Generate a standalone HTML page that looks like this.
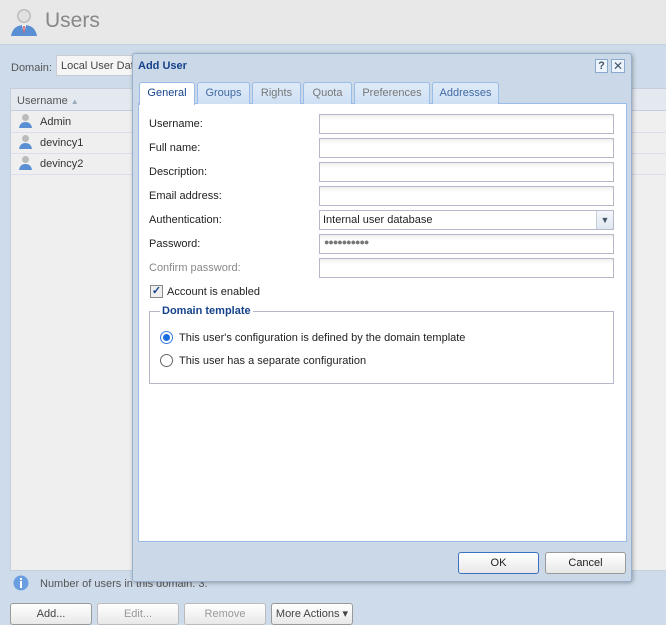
<!DOCTYPE html>
<html><head><style>
*{box-sizing:border-box;margin:0;padding:0}
body{width:666px;height:620px;overflow:hidden;background:#cedbea;font-family:"Liberation Sans",sans-serif;font-size:11px;color:#333;position:relative}
.abs{position:absolute}
.hdr{left:0;top:0;width:666px;height:45px;background:#e8e8e8;border-bottom:1px solid #c5d2e0}
.grid{left:10px;top:88px;width:660px;height:483px;background:#efefef;border:1px solid #c5cfdc}
.ghead{left:0;top:0;width:100%;height:22px;background:#e4e9f0;border-bottom:1px solid #c5cfdc}
.row{left:0;width:100%;height:21px;border-bottom:1px solid #dde;}
.inp{position:absolute;left:319px;width:295px;height:20px;border:1px solid #b5b8c8;background:linear-gradient(#f0f0f0,#fff 5px)}
.lbl{position:absolute;left:149px;font-size:11px;color:#222}
.tab{position:absolute;top:82px;height:22px;border:1px solid #99bce8;border-bottom:none;background:linear-gradient(#dfeaf7,#cfe0f5);color:#416aa3;font-size:11px;text-align:center;line-height:21px;border-radius:3px 3px 0 0}
.btn{position:absolute;height:22px;border:1px solid #999;border-radius:3px;background:linear-gradient(#fff,#e8e8e8);text-align:center;line-height:20px;font-size:11px}
</style></head><body>
<div class="abs hdr">
<svg class="abs" style="left:9px;top:6px" width="30" height="30" viewBox="0 0 30 30"><circle cx="15" cy="10" r="7" fill="#bbb"/><circle cx="15" cy="10" r="5.5" fill="#e0e0e0"/><path d="M2 30 Q4 19 15 19 Q26 19 28 30Z" fill="#5b8fd4"/><path d="M13 19 L17 19 L15 28Z" fill="#fff"/><path d="M14.3 20 L15.7 20 L15.4 27 L14.6 27Z" fill="#d33"/></svg>
<div class="abs" style="left:45px;top:9px;font-size:21px;color:#888">Users</div>
</div>
<div class="abs" style="left:11px;top:62px;color:#555">Domain:</div>
<div class="abs" style="left:56px;top:55px;width:90px;height:21px;border:1px solid #c8ccd4;background:#f5f5f5;padding:4px 0 0 4px;color:#444;overflow:hidden;white-space:nowrap">Local User Database</div>
<div class="abs grid">
<div class="abs ghead"><span class="abs" style="left:6px;top:6px;color:#555">Username <span style="color:#9ab;font-size:8px">▲</span></span></div>
<div class="abs row" style="top:23px"><span class="abs" style="left:29px;top:4px">Admin</span></div>
<div class="abs row" style="top:44px"><span class="abs" style="left:29px;top:4px">devincy1</span></div>
<div class="abs row" style="top:65px"><span class="abs" style="left:29px;top:4px">devincy2</span></div>
</div>
<svg class="abs" style="left:18px;top:113px" width="15" height="60" viewBox="0 0 15 60"><g id="u"><circle cx="7.5" cy="4.5" r="3.5" fill="#bbb"/><path d="M1 15 Q2 9 7.5 9 Q13 9 14 15Z" fill="#5b8fd4"/></g><use href="#u" y="21"/><use href="#u" y="42"/></svg>
<svg class="abs" style="left:13px;top:575px" width="16" height="16"><circle cx="8" cy="8" r="7.5" fill="#6a9ee0"/><rect x="7" y="6" width="2" height="7" fill="#fff"/><rect x="7" y="3" width="2" height="2" fill="#fff"/></svg>
<div class="abs" style="left:40px;top:578px;color:#555">Number of users in this domain: 3.</div>
<div class="btn" style="left:10px;top:603px;width:82px;color:#444">Add...</div>
<div class="btn" style="left:97px;top:603px;width:82px;color:#999;border-color:#bbb">Edit...</div>
<div class="btn" style="left:184px;top:603px;width:82px;color:#999;border-color:#bbb">Remove</div>
<div class="btn" style="left:271px;top:603px;width:82px;color:#444">More Actions ▾</div>

<div class="abs" style="left:132px;top:53px;width:500px;height:529px;background:#cbd8e8;border:1px solid #99b0cc;box-shadow:1px 1px 4px rgba(0,0,0,.3);border-radius:3px"></div>
<div class="abs" style="left:138px;top:60px;font-weight:bold;color:#15428b;font-size:11px">Add User</div>
<div class="abs" style="left:595px;top:59px;width:13px;height:14px;border:1px solid #8aa8d0;background:#eef4fc;font-size:11px;font-weight:bold;color:#456;text-align:center;line-height:12px">?</div>
<div class="abs" style="left:611px;top:59px;width:14px;height:14px;border:1px solid #8aa8d0;background:#eef4fc;font-size:12px;color:#456;text-align:center;line-height:12px">✕</div>
<div class="abs" style="left:138px;top:103px;width:489px;height:439px;background:#fff;border:1px solid #99bce8"></div>
<div class="tab" style="left:139px;width:56px;background:#fff;color:#15428b;height:23px">General</div>
<div class="tab" style="left:197px;width:53px">Groups</div>
<div class="tab" style="left:252px;width:49px;color:#777">Rights</div>
<div class="tab" style="left:303px;width:49px;color:#777">Quota</div>
<div class="tab" style="left:354px;width:76px;color:#777">Preferences</div>
<div class="tab" style="left:432px;width:67px">Addresses</div>

<div class="lbl" style="top:118px">Username:</div><div class="inp" style="top:114px"></div>
<div class="lbl" style="top:142px">Full name:</div><div class="inp" style="top:138px"></div>
<div class="lbl" style="top:166px">Description:</div><div class="inp" style="top:162px"></div>
<div class="lbl" style="top:190px">Email address:</div><div class="inp" style="top:186px"></div>
<div class="lbl" style="top:214px">Authentication:</div><div class="inp" style="top:210px;background:#fff;padding:3px 0 0 3px;color:#222">Internal user database<div class="abs" style="right:0;top:0;width:17px;height:18px;background:linear-gradient(#f4f7fb,#dfe7f1);border-left:1px solid #c5cfdc;color:#456;font-size:9px;text-align:center;line-height:18px">▼</div></div>
<div class="lbl" style="top:238px">Password:</div><div class="inp" style="top:234px;padding:2px 0 0 4px;color:#777;font-size:9px;letter-spacing:-1px">●●●●●●●●●●</div>
<div class="lbl" style="top:262px;color:#888">Confirm password:</div><div class="inp" style="top:258px"></div>
<div class="abs" style="left:150px;top:285px;width:13px;height:13px;border:1px solid #888;background:#eee;font-size:11px;color:#15428b;line-height:11px;text-align:center;font-weight:bold">✓</div>
<div class="abs" style="left:167px;top:286px;color:#222">Account is enabled</div>
<div class="abs" style="left:149px;top:311px;width:465px;height:73px;border:1px solid #b5b8c8"></div>
<div class="abs" style="left:160px;top:305px;background:#fff;padding:0 2px;font-weight:bold;color:#15428b">Domain template</div>
<div class="abs" style="left:160px;top:331px;width:13px;height:13px;border:1px solid #3a7be0;border-radius:50%;background:#fff"><div class="abs" style="left:2px;top:2px;width:7px;height:7px;border-radius:50%;background:#1a6fe0"></div></div>
<div class="abs" style="left:179px;top:332px;color:#222">This user's configuration is defined by the domain template</div>
<div class="abs" style="left:160px;top:354px;width:13px;height:13px;border:1px solid #666;border-radius:50%;background:#fff"></div>
<div class="abs" style="left:179px;top:355px;color:#222">This user has a separate configuration</div>

<div class="btn" style="left:458px;top:552px;width:81px;border-color:#3b6fc0;color:#222">OK</div>
<div class="btn" style="left:545px;top:552px;width:81px;color:#222">Cancel</div>
</body></html>
